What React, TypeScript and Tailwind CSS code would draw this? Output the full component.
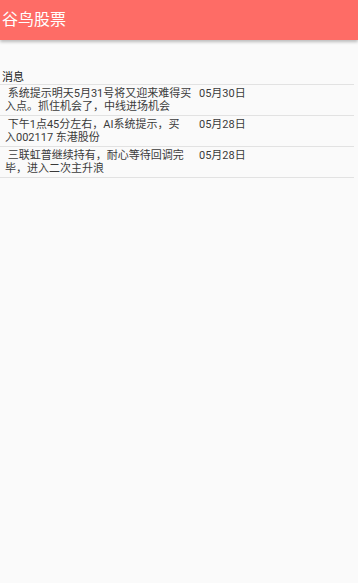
const messages = [
  { text: " 系统提示明天5月31号将又迎来难得买入点。抓住机会了，中线进场机会", date: "05月30日" },
  { text: " 下午1点45分左右，AI系统提示，买\n入002117 东港股份", date: "05月28日" },
  { text: " 三联虹普继续持有，耐心等待回调完毕，进入二次主升浪", date: "05月28日" },
];

export default function App() {
  return (
    <div
      className="min-h-[583px] w-full bg-[#fafafa]"
      style={{ fontFamily: 'Roboto, "Noto Sans CJK SC", "Noto Sans", sans-serif' }}
    >
      <header className="flex h-10 items-center bg-[#fe6c66] pl-[2px] shadow-[0_2px_3px_rgba(0,0,0,0.25)]">
        <h1 className="text-[16px] leading-none text-white">谷鸟股票</h1>
      </header>

      <div className="pt-[31px] pr-[4px]">
        <div className="border-b border-[#e2e2e2] pl-[2px] text-[11px] leading-[13px] text-[#222]">
          消息
        </div>
        {messages.map((m, i) => (
          <div key={i} className="flex border-b border-[#e2e2e2] py-[2px] text-[11px] leading-[13px] text-[#3a3a3a]">
            <p className="w-[196px] shrink-0 whitespace-pre-wrap pl-[5px] pr-[2px]">{m.text}</p>
            <span className="pl-[3px]">{m.date}</span>
          </div>
        ))}
      </div>
    </div>
  );
}
